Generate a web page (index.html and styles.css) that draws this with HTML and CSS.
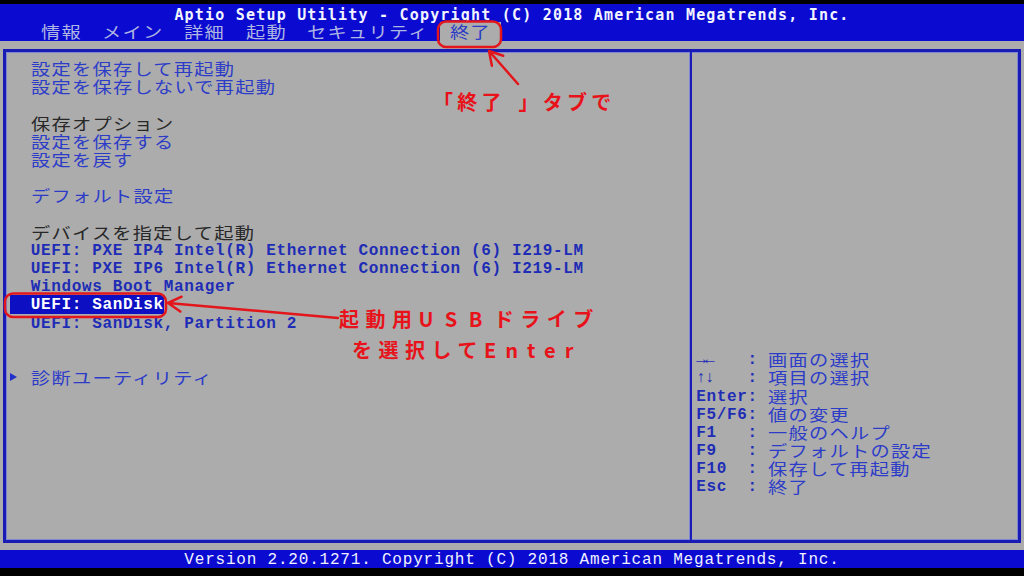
FILE: index.html
```html
<!DOCTYPE html>
<html lang="ja">
<head>
<meta charset="utf-8">
<title>Aptio Setup Utility</title>
<link rel="stylesheet" href="styles.css">
</head>
<body>
<div class="screen">
  <header class="header">
    <div class="title">Aptio Setup Utility - Copyright (C) 2018 American Megatrends, Inc.</div>
    <nav class="tabs">
      <span class="tab tab-info"><span class="jp">情報</span></span>
      <span class="tab tab-main"><span class="jp">メイン</span></span>
      <span class="tab tab-adv"><span class="jp">詳細</span></span>
      <span class="tab tab-boot"><span class="jp">起動</span></span>
      <span class="tab tab-sec"><span class="jp">セキュリティ</span></span>
      <span class="tab tab-exit active"><span class="jp">終了</span></span>
    </nav>
  </header>

  <main class="main">
    <div class="frame">
      <section class="pane pane-left">
        <div class="row"><span class="jp">設定を保存して再起動</span></div>
        <div class="row"><span class="jp">設定を保存しないで再起動</span></div>
        <div class="row"></div>
        <div class="row head"><span class="jp">保存オプション</span></div>
        <div class="row"><span class="jp">設定を保存する</span></div>
        <div class="row"><span class="jp">設定を戻す</span></div>
        <div class="row"></div>
        <div class="row"><span class="jp">デフォルト設定</span></div>
        <div class="row"></div>
        <div class="row head"><span class="jp">デバイスを指定して起動</span></div>
        <div class="row mono">UEFI: PXE IP4 Intel(R) Ethernet Connection (6) I219-LM</div>
        <div class="row mono">UEFI: PXE IP6 Intel(R) Ethernet Connection (6) I219-LM</div>
        <div class="row mono">Windows Boot Manager</div>
        <div class="row mono selected">UEFI: SanDisk</div>
        <div class="row mono">UEFI: SanDisk, Partition 2</div>
        <div class="row"></div>
        <div class="row"></div>
        <div class="row submenu"><span class="tri"></span><span class="jp">診断ユーティリティ</span></div>
      </section>
      <div class="divider"></div>
      <aside class="pane pane-right">
        <ul class="help">
          <li><span class="key arrows">→←</span><span class="colon">:</span><span class="jp">画面の選択</span></li>
          <li><span class="key arrows">↑↓</span><span class="colon">:</span><span class="jp">項目の選択</span></li>
          <li><span class="key">Enter</span><span class="colon">:</span><span class="jp">選択</span></li>
          <li><span class="key">F5/F6</span><span class="colon">:</span><span class="jp">値の変更</span></li>
          <li><span class="key">F1</span><span class="colon">:</span><span class="jp">一般のヘルプ</span></li>
          <li><span class="key">F9</span><span class="colon">:</span><span class="jp">デフォルトの設定</span></li>
          <li><span class="key">F10</span><span class="colon">:</span><span class="jp">保存して再起動</span></li>
          <li><span class="key">Esc</span><span class="colon">:</span><span class="jp">終了</span></li>
        </ul>
      </aside>
    </div>
  </main>

  <footer class="footer">Version 2.20.1271. Copyright (C) 2018 American Megatrends, Inc.</footer>

  <svg class="marks" viewBox="0 0 1024 576" width="1024" height="576" aria-hidden="true">
    <g fill="none" stroke="#e3161c" stroke-width="2.5" stroke-linecap="round" stroke-linejoin="round">
      <rect x="438" y="21.5" width="63" height="25.5" rx="8"/>
      <rect x="5" y="293.5" width="161" height="23.5" rx="8"/>
      <path d="M518 84 L489 51 M491.9 65.7 L489 51 L503.2 55.8"/>
      <path d="M338 318 L168 303 M180.3 311.6 L168 303 L181.6 296.7"/>
    </g>
  </svg>

  <div class="note note-tab">「終了<span class="close">」</span>タブで</div>
  <div class="note note-usb">
    <div class="line">起動用<span class="latin">USB</span>ドライブ</div>
    <div class="line second">を選択して<span class="latin enter">Enter</span></div>
  </div>
</div>
</body>
</html>
```

FILE: styles.css
```css
* {
  box-sizing: border-box;
  margin: 0;
  padding: 0;
}

html,
body {
  width: 1024px;
  height: 576px;
  overflow: hidden;
  background: #000;
}

body {
  font-family: "Noto Sans CJK JP", "Noto Sans", sans-serif;
}

.screen {
  position: relative;
  width: 1024px;
  height: 576px;
  padding-top: 4.3px;
  display: flex;
  flex-direction: column;
}

/* Japanese text rendered on the 2-cell BIOS grid */
.jp {
  display: inline-block;
  font-family: "Noto Sans CJK JP", sans-serif;
  font-size: 16px;
  letter-spacing: 1.07px;
  line-height: 18.2px;
  white-space: nowrap;
  transform: scaleX(1.2);
  transform-origin: 0 50%;
  vertical-align: top;
}

/* Header */
.header {
  background: #0a0ad0;
  height: 36.4px;
  flex: none;
}

.title {
  height: 18.2px;
  padding-top: 1.5px;
  line-height: 18.2px;
  text-align: center;
  font-family: "DejaVu Sans Mono", monospace;
  font-weight: bold;
  font-size: 15px;
  letter-spacing: 1.2px;
  color: #f2f4ff;
  white-space: pre;
}

.tabs {
  display: grid;
  grid-template-columns: repeat(100, 10.24px);
  height: 18.2px;
}

.tab {
  color: #aeb6e2;
  height: 18.2px;
  line-height: 18.2px;
}

.tab-info { grid-column: 5 / span 4; }
.tab-main { grid-column: 11 / span 6; }
.tab-adv { grid-column: 19 / span 4; }
.tab-boot { grid-column: 25 / span 4; }
.tab-sec { grid-column: 31 / span 12; }

.tab.active {
  grid-column: 44 / span 6;
  padding-left: 10.24px;
  background: #acacac;
  color: #2a3ac6;
}

/* Main area */
.main {
  background: #acacac;
  height: 509.6px;
  flex: none;
  padding: 8.8px 3px 7.3px;
}

.frame {
  height: 100%;
  display: grid;
  grid-template-columns: 1fr 3px 326px;
  border: 3px solid #1a1ab4;
  box-shadow: inset 0 0 0 1px #7c86d4;
}

.divider {
  background: linear-gradient(90deg, #7c86d4 0 1px, #1a1ab4 1px 3px);
}

.pane-left {
  padding: 6.5px 0 0 4.24px;
}

.row {
  height: 18.2px;
  line-height: 18.2px;
  padding-left: 20.48px;
  color: #2c3cc8;
  white-space: pre;
}

.row.head {
  color: #272727;
}

.row.mono {
  font-family: "Liberation Mono", monospace;
  font-weight: bold;
  font-size: 16px;
  letter-spacing: 0.64px;
  color: #1e2cb6;
  padding-top: 1px;
}

.row.selected {
  width: fit-content;
  background: #0c10c2;
  color: #ffffff;
}

.row.submenu {
  display: flex;
  align-items: center;
  padding-left: 0;
}

.tri {
  width: 0;
  height: 0;
  border-left: 7px solid #2030c8;
  border-top: 4.5px solid transparent;
  border-bottom: 4.5px solid transparent;
  margin-right: 13.48px;
}

.pane-right {
  padding: 6.5px 0 0 4.3px;
}

.help {
  list-style: none;
  margin-top: 291.2px;
}

.help li {
  height: 18.2px;
  line-height: 18.2px;
  white-space: nowrap;
}

.key,
.colon {
  display: inline-block;
  vertical-align: top;
  padding-top: 2px;
  font-family: "Liberation Mono", monospace;
  font-weight: bold;
  font-size: 16px;
  letter-spacing: 0.64px;
  line-height: 16.2px;
  color: #1e2cb6;
}

.key {
  width: 51.2px;
}

.key.arrows {
  letter-spacing: -1px;
}

.colon {
  width: 20.48px;
}

.help .jp {
  color: #2c3cc8;
}

/* Footer */
.footer {
  background: #0a0ad0;
  height: 18.2px;
  flex: none;
  padding-top: 1.5px;
  line-height: 16.7px;
  text-align: center;
  font-family: "Liberation Mono", monospace;
  font-size: 16px;
  letter-spacing: 0.8px;
  color: #f0f2ff;
  white-space: pre;
}

/* Red annotations laid over the screenshot */
.marks {
  position: absolute;
  left: 0;
  top: 0;
  pointer-events: none;
}

.note {
  position: absolute;
  font-family: "Noto Sans CJK JP", sans-serif;
  font-weight: bold;
  font-size: 20px;
  line-height: 31px;
  color: #e8121a;
  white-space: nowrap;
}

.note-tab {
  left: 433px;
  top: 85.5px;
  letter-spacing: 4.2px;
}

.note-tab .close {
  margin-left: 13px;
}

.note-usb {
  left: 339px;
  top: 303px;
  letter-spacing: 6.5px;
}

.note-usb .second {
  margin-left: 13px;
}

.note-usb .latin {
  letter-spacing: 11.5px;
}

.note-usb .latin.enter {
  letter-spacing: 9px;
}
```
